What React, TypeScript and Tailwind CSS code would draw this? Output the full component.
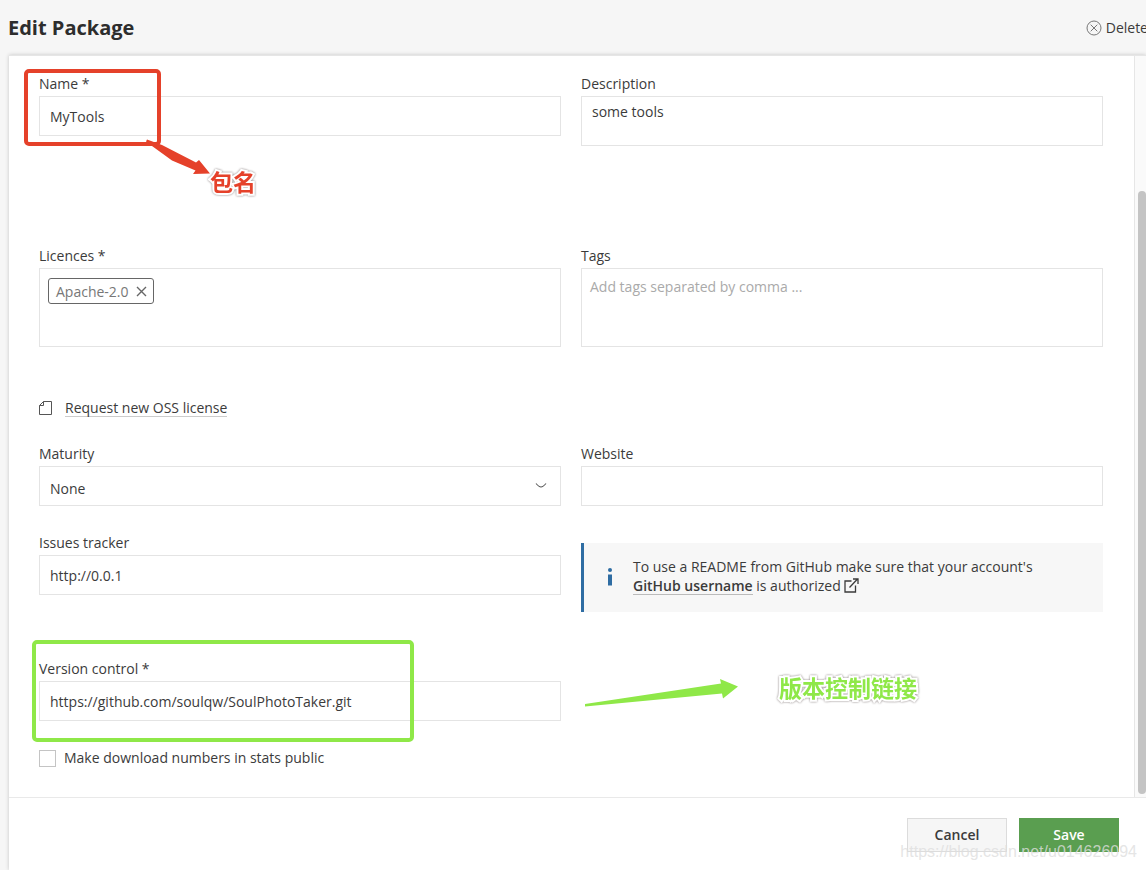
import { useState } from "react";
import type { ReactNode } from "react";

const control =
  "block w-full rounded-none border border-[#e4e4e4] bg-white px-[10px] text-sm text-[#3b3b3b] outline-none focus:border-[#9a9a9a]";

const callout =
  "pointer-events-none absolute whitespace-nowrap font-['Noto_Sans_CJK_SC',sans-serif] text-[23px] leading-7 font-bold [-webkit-text-stroke:4px_white] [paint-order:stroke_fill] [filter:drop-shadow(0_0_1px_#8a8080)]";

function Field({ id, label, children }: { id: string; label: string; children: ReactNode }) {
  return (
    <div className="relative min-w-0">
      <label htmlFor={id} className="block text-sm leading-6">
        {label}
      </label>
      {children}
    </div>
  );
}

function Header() {
  return (
    <header className="flex h-[55px] shrink-0 items-center justify-between overflow-hidden pl-2">
      <h1 className="text-xl font-bold text-[#2d2d2d]">Edit Package</h1>
      <button type="button" className="-mr-[2px] flex items-center gap-1 text-sm whitespace-nowrap">
        <svg width="16" height="16" viewBox="0 0 16 16" fill="none" stroke="#777" aria-hidden="true">
          <circle cx="8" cy="8" r="7" />
          <path d="M4.7 4.7l6.6 6.6M11.3 4.7l-6.6 6.6" />
        </svg>
        Delete
      </button>
    </header>
  );
}

export default function App() {
  const [licences, setLicences] = useState(["Apache-2.0"]);

  return (
    <div className="flex h-screen flex-col overflow-hidden bg-[#f6f6f6] font-['Open_Sans',sans-serif] text-[#3b3b3b]">
      <Header />
      <form
        onSubmit={(e) => e.preventDefault()}
        className="ml-[9px] flex min-h-0 flex-1 flex-col border-t border-[#e6e6e6] bg-white shadow-[0_0_4px_rgba(0,0,0,0.2)]"
      >
        <div className="flex min-h-0 flex-1">
          <main className="min-w-0 flex-1 overflow-hidden pt-4 pr-[31px] pl-[30px]">
            <div className="grid grid-cols-2 gap-5">
              <Field id="name" label="Name *">
                <input id="name" defaultValue="MyTools" className={`${control} h-10`} />
                <div className="pointer-events-none absolute -top-[3px] -left-[15px] h-[77px] w-[137px] rounded-[5px] border-4 border-[#e5412a]" />
                <svg
                  className="pointer-events-none absolute top-[66px] left-[106px]"
                  width="66"
                  height="38"
                  viewBox="0 0 66 38"
                  aria-hidden="true"
                >
                  <path d="M1 3.500L2 1.500L17 7L51 24.500L54 22L65 35.500L48 36L50.500 32.500L27 22.500L7 8Z" fill="#e5412a" />
                </svg>
                <span className={`${callout} top-[95px] left-[171px] text-[#e5412a]`}>包名</span>
              </Field>
              <Field id="description" label="Description">
                <textarea
                  id="description"
                  defaultValue="some tools"
                  className={`${control} h-[50px] resize-none py-[5px] leading-5`}
                />
              </Field>
            </div>

            <div className="mt-[98px] grid grid-cols-2 gap-5">
              <Field id="licences" label="Licences *">
                <div className="flex h-[79px] items-start gap-2 border border-[#e4e4e4] px-2 py-[9px]">
                  {licences.map((name) => (
                    <span
                      key={name}
                      className="flex h-[26px] shrink-0 items-center gap-[7px] rounded-[3px] border border-[#666] pt-px pr-[6px] pl-[7px] text-sm text-[#777]"
                    >
                      {name}
                      <button
                        type="button"
                        aria-label={`Remove ${name}`}
                        onClick={() => setLicences(licences.filter((l) => l !== name))}
                      >
                        <svg width="11" height="11" viewBox="0 0 11 11" stroke="#666" strokeWidth="1.4" aria-hidden="true">
                          <path d="M1 1l9 9M10 1l-9 9" />
                        </svg>
                      </button>
                    </span>
                  ))}
                  <input id="licences" className="h-[26px] min-w-0 flex-1 text-sm outline-none" />
                </div>
              </Field>
              <Field id="tags" label="Tags">
                <textarea
                  id="tags"
                  placeholder="Add tags separated by comma ..."
                  className="block h-[79px] w-full resize-none border border-[#e4e4e4] px-2 py-2 text-sm leading-5 outline-none placeholder:text-[#aaa]"
                />
              </Field>
            </div>

            <div className="mt-[51px] flex h-5 items-center gap-[13px]">
              <svg width="13" height="14" viewBox="0 0 13 14" fill="none" stroke="#555" aria-hidden="true">
                <path d="M4.5 .5h8v13H.5v-9zM4.5 .5v4h-4" />
              </svg>
              <a href="#request" className="border-b border-[#ccc] text-sm leading-4">
                Request new OSS license
              </a>
            </div>

            <div className="mt-6 grid grid-cols-2 gap-5">
              <Field id="maturity" label="Maturity">
                <div className="relative">
                  <select id="maturity" className={`${control} h-10 appearance-none pt-[5px]`}>
                    <option>None</option>
                    <option>Development</option>
                    <option>Official</option>
                    <option>Stable</option>
                  </select>
                  <svg
                    className="pointer-events-none absolute top-4 right-[14px]"
                    width="12"
                    height="8"
                    viewBox="0 0 12 8"
                    fill="none"
                    stroke="#555"
                    strokeWidth="1.1"
                    aria-hidden="true"
                  >
                    <path d="M1 1.5Q4 5 6 5Q8 5 11 1.5" />
                  </svg>
                </div>
              </Field>
              <Field id="website" label="Website">
                <input id="website" className={`${control} h-10`} />
              </Field>
            </div>

            <div className="mt-[25px] grid grid-cols-2 gap-5">
              <Field id="issues" label="Issues tracker">
                <input id="issues" defaultValue="http://0.0.1" className={`${control} h-10`} />
              </Field>
              <aside className="mt-3 flex h-[69px] items-start border-l-3 border-[#2f6da3] bg-[#f7f7f7] pt-[14px]">
                <svg className="mt-[10px] mr-5 ml-6 shrink-0" width="5" height="19" viewBox="0 0 5 19" fill="#2f6da3" aria-hidden="true">
                  <circle cx="2" cy="3" r="2" />
                  <rect x="0" y="7.5" width="4" height="11" />
                </svg>
                <p className="text-sm leading-[19px]">
                  To use a README from GitHub make sure that your account's
                  <br />
                  <a href="#github" className="inline-block border-b border-[#bbb] leading-4 font-semibold">
                    GitHub username
                  </a>{" "}
                  is authorized{" "}
                  <svg
                    className="inline-block align-[-2px]"
                    width="15"
                    height="15"
                    viewBox="0 0 15 15"
                    fill="none"
                    stroke="#3b3b3b"
                    strokeWidth="1.3"
                    aria-hidden="true"
                  >
                    <path d="M7.500 3H1v11h10.500V7.500M5.500 9.500L13.500 1M9 1h5v5" />
                  </svg>
                </p>
              </aside>
            </div>

            <div className="mt-[45px] grid grid-cols-2 gap-5">
              <Field id="vcs" label="Version control *">
                <input
                  id="vcs"
                  defaultValue="https://github.com/soulqw/SoulPhotoTaker.git"
                  className={`${control} h-10`}
                />
                <div className="pointer-events-none absolute -top-[17px] -left-[7px] h-[102px] w-[382px] rounded-[5px] border-4 border-[#8fe848]" />
              </Field>
              <div className="relative">
                <svg
                  className="pointer-events-none absolute top-[21px] left-[3px]"
                  width="156"
                  height="30"
                  viewBox="0 0 156 30"
                  aria-hidden="true"
                >
                  <path d="M1 26L137 5.500L136 1L154 8.500L139 20.500L138 15.500L1 28.500Z" fill="#8fe848" />
                </svg>
                <span className={`${callout} top-4 left-[198px] text-[#8fe848]`}>版本控制链接</span>
              </div>
            </div>

            <div className="mt-[27px] flex h-5 items-center gap-2">
              <input
                id="stats"
                type="checkbox"
                className="h-[17px] w-[17px] appearance-none border border-[#c4c4c4] bg-white checked:bg-[#5a9e50]"
              />
              <label htmlFor="stats" className="text-sm">
                Make download numbers in stats public
              </label>
            </div>
          </main>
          <div className="flex w-3 shrink-0 flex-col border-l border-[#e6e6e6] bg-[#fafafa] pt-[135px] pb-[3px] pl-[3px]">
            <div className="flex-1 rounded-full bg-[#c4c4c4]" />
          </div>
        </div>

        <footer className="relative flex h-[73px] shrink-0 items-start justify-end gap-3 border-t border-[#e9e9e9] pt-5 pr-[27px]">
          <button
            type="button"
            className="h-[34px] w-[100px] border border-[#dcdcdc] bg-[#f6f6f6] text-sm font-semibold"
          >
            Cancel
          </button>
          <button type="submit" className="h-[34px] w-[100px] bg-[#5a9e50] text-sm font-semibold text-white">
            Save
          </button>
          <span className="pointer-events-none absolute right-[9px] bottom-[6px] font-['Liberation_Sans',sans-serif] text-base text-[#dedede]/80">
            https://blog.csdn.net/u014626094
          </span>
        </footer>
      </form>
    </div>
  );
}
